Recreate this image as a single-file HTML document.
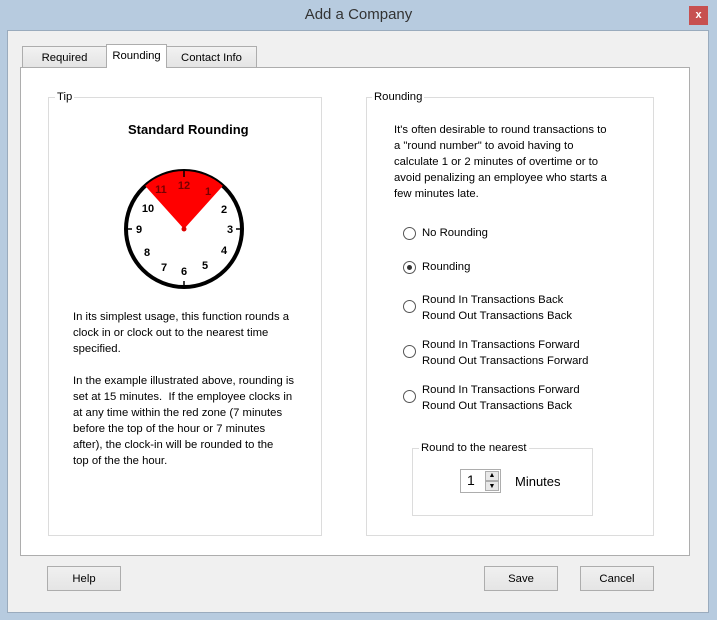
<!DOCTYPE html>
<html><head><meta charset="utf-8"><style>
*{margin:0;padding:0;box-sizing:border-box}
body{width:717px;height:620px;background:#b7cbdf;position:relative;overflow:hidden;font-family:"Liberation Sans",sans-serif;font-size:11.3px;color:#000}
.a{position:absolute;white-space:nowrap}
.title{left:0;top:6px;width:717px;text-align:center;font-size:15px;color:#333}
.close{left:689px;top:6px;width:19px;height:19px;background:#c75050;color:#fff;font-size:11px;font-weight:bold;text-align:center;line-height:18px}
.inner{left:7px;top:30px;width:702px;height:583px;background:#f0f0f0;border:1px solid #9aabbd}
.panel{left:20px;top:67px;width:670px;height:489px;background:#fff;border:1px solid #adadad}
.tab{top:46px;height:22px;border:1px solid #adadad;background:linear-gradient(#f2f2f2,#e4e4e4);text-align:center;line-height:23px}
.tabsel{top:44px;height:24px;background:#fff;border-bottom:none;line-height:23px}
.grp{border:1px solid #dcdcdc}
.lg{background:#fff;padding:0 2px}
.line{line-height:16px}
.radio{width:13px;height:13px;border:1px solid #555;border-radius:50%;background:#fff}
.dot{position:absolute;left:3px;top:3px;width:5px;height:5px;border-radius:50%;background:#333}
.btn{height:25px;border:1px solid #adadad;background:linear-gradient(#f0f0f0,#e5e5e5);text-align:center;line-height:25px}
</style></head><body>
<div class="a title">Add a Company</div>
<div class="a close">x</div>
<div class="a inner"></div>
<div class="a panel"></div>
<div class="a tab" style="left:22px;width:85px">Required</div>
<div class="a tab tabsel" style="left:106px;width:61px">Rounding</div>
<div class="a tab" style="left:166px;width:91px">Contact Info</div>

<div class="a grp" style="left:48px;top:97px;width:274px;height:439px"></div>
<div class="a lg" style="left:55px;top:91px">Tip</div>
<div class="a" style="left:128px;top:122px;font-size:13px;font-weight:bold">Standard Rounding</div>
<svg class="a" style="left:120px;top:165px" width="130" height="130" viewBox="0 0 130 130">
<circle cx="64" cy="64" r="58" fill="#fff" stroke="#000" stroke-width="4"/>
<path d="M64 64 L25.2 20.9 A58 58 0 0 1 102.8 20.9 Z" fill="#f00"/>
<g stroke="#000" stroke-width="1.5">
<line x1="64" y1="6" x2="64" y2="12"/><line x1="64" y1="116" x2="64" y2="122"/>
<line x1="6" y1="64" x2="12" y2="64"/><line x1="116" y1="64" x2="122" y2="64"/>
</g>
<circle cx="64" cy="64" r="2.5" fill="#d00"/>
<g font-family="Liberation Sans" font-weight="bold" font-size="11" text-anchor="middle">
<text x="64" y="24" fill="#700">12</text><text x="88" y="30" fill="#700">1</text><text x="41" y="28" fill="#700">11</text>
<text x="104" y="48">2</text><text x="110" y="68">3</text><text x="104" y="89">4</text>
<text x="85" y="104">5</text><text x="64" y="110">6</text><text x="44" y="106">7</text>
<text x="27" y="91">8</text><text x="19" y="68">9</text><text x="28" y="47">10</text>
</g></svg>
<div class="a line" style="left:73px;top:309px">In its simplest usage, this function rounds a<br>clock in or clock out to the nearest time<br>specified.</div>
<div class="a line" style="left:73px;top:373px">In the example illustrated above, rounding is<br>set at 15 minutes.&nbsp; If the employee clocks in<br>at any time within the red zone (7 minutes<br>before the top of the hour or 7 minutes<br>after), the clock-in will be rounded to the<br>top of the the hour.</div>

<div class="a grp" style="left:366px;top:97px;width:288px;height:439px"></div>
<div class="a lg" style="left:372px;top:91px">Rounding</div>
<div class="a line" style="left:394px;top:122px">It's often desirable to round transactions to<br>a "round number" to avoid having to<br>calculate 1 or 2 minutes of overtime or to<br>avoid penalizing an employee who starts a<br>few minutes late.</div>
<div class="a radio" style="left:403px;top:227px"></div><div class="a" style="left:422px;top:227px">No Rounding</div>
<div class="a radio" style="left:403px;top:261px"><div class="dot"></div></div><div class="a" style="left:422px;top:261px">Rounding</div>
<div class="a radio" style="left:403px;top:300px"></div><div class="a line" style="left:422px;top:292px">Round In Transactions Back<br>Round Out Transactions Back</div>
<div class="a radio" style="left:403px;top:345px"></div><div class="a line" style="left:422px;top:337px">Round In Transactions Forward<br>Round Out Transactions Forward</div>
<div class="a radio" style="left:403px;top:390px"></div><div class="a line" style="left:422px;top:382px">Round In Transactions Forward<br>Round Out Transactions Back</div>

<div class="a grp" style="left:412px;top:448px;width:181px;height:68px"></div>
<div class="a lg" style="left:419px;top:442px">Round to the nearest</div>
<div class="a" style="left:460px;top:469px;width:41px;height:24px;border:1px solid #adadad;background:#fff"></div>
<div class="a" style="left:467px;top:472px;font-size:14px">1</div>
<div class="a" style="left:485px;top:471px;width:14px;height:10px;border:1px solid #adadad;background:#e8e8e8;font-size:7px;text-align:center;line-height:8px">▲</div>
<div class="a" style="left:485px;top:481px;width:14px;height:10px;border:1px solid #adadad;background:#e8e8e8;font-size:7px;text-align:center;line-height:9px">▼</div>
<div class="a" style="left:515px;top:474px;font-size:13px">Minutes</div>

<div class="a btn" style="left:47px;top:566px;width:74px">Help</div>
<div class="a btn" style="left:484px;top:566px;width:74px">Save</div>
<div class="a btn" style="left:580px;top:566px;width:74px">Cancel</div>
</body></html>
